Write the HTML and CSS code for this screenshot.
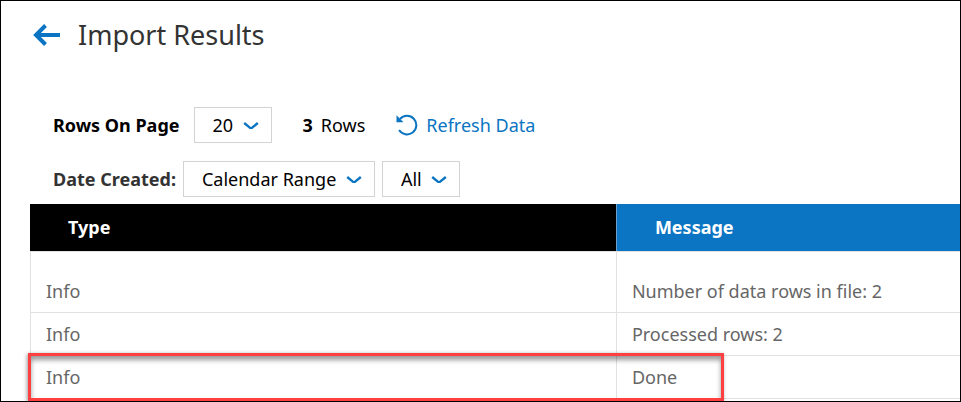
FILE: index.html
```html
<!DOCTYPE html>
<html lang="en">
<head>
    <meta charset="UTF-8">
    <meta name="viewport" content="width=device-width, initial-scale=1.0">
    <title>Import Results</title>
    <link rel="stylesheet" href="styles.css">
</head>
<body>
    <main class="page">
        <header class="page-header">
            <a class="back-link" href="#" aria-label="Back">
                <svg width="28" height="22" viewBox="0 0 28 22" fill="none" stroke="currentColor" stroke-width="4">
                    <path d="M27 11H3M12.5 1.5L3 11L12.5 20.5"/>
                </svg>
            </a>
            <h1>Import Results</h1>
        </header>

        <div class="toolbar">
            <label class="toolbar-label" for="page-size">Rows On Page</label>
            <div class="dropdown">
                <select id="page-size">
                    <option>20</option>
                </select>
                <svg class="chevron" width="16" height="10" viewBox="0 0 16 10">
                    <path d="M1.2 2L6.5 6.4Q8 7.4 9.5 6.4L14.8 2"/>
                </svg>
            </div>
            <span class="row-count"><b>3</b> <span>Rows</span></span>
            <button class="refresh-button" type="button">
                <svg width="22" height="22" viewBox="0 0 22 22" fill="none" stroke="currentColor" stroke-width="2">
                    <path d="M4 5A9.3 9.3 0 1 1 3.1 16"/>
                    <path d="M0.5 1.2V8.2H7.5Z" fill="currentColor" stroke="none"/>
                </svg>
                Refresh Data
            </button>
        </div>

        <div class="filters">
            <label class="filter-label" for="date-range">Date Created:</label>
            <div class="dropdown">
                <select id="date-range">
                    <option>Calendar Range</option>
                </select>
                <svg class="chevron" width="16" height="10" viewBox="0 0 16 10">
                    <path d="M1.2 2L6.5 6.4Q8 7.4 9.5 6.4L14.8 2"/>
                </svg>
            </div>
            <div class="dropdown">
                <select id="date-value" aria-label="Date value">
                    <option>All</option>
                </select>
                <svg class="chevron" width="16" height="10" viewBox="0 0 16 10">
                    <path d="M1.2 2L6.5 6.4Q8 7.4 9.5 6.4L14.8 2"/>
                </svg>
            </div>
        </div>

        <table class="results">
            <thead>
                <tr>
                    <th class="type-column" scope="col">Type</th>
                    <th class="message-column" scope="col">Message</th>
                </tr>
            </thead>
            <tbody>
                <tr class="first-row">
                    <td>Info</td>
                    <td>Number of data rows in file: 2</td>
                </tr>
                <tr>
                    <td>Info</td>
                    <td>Processed rows: 2</td>
                </tr>
                <tr>
                    <td class="highlighted">Info</td>
                    <td>Done</td>
                </tr>
            </tbody>
        </table>
    </main>
</body>
</html>
```

FILE: styles.css
```css
:root {
    --blue: #0b75c3;
    --text-color: #333333;
    --cell-text: #666666;
    --line: #e1e1e1;
    --control-border: #d3d3d3;
    --highlight: #ff4040;
}

*,
*::after {
    box-sizing: border-box;
}

body {
    margin: 0;
    background-color: #ffffff;
    color: #000000;
    font-family: "Noto Sans", sans-serif;
    font-size: 18px;
    line-height: 24px;
}

.page {
    min-height: 100vh;
    padding: 14px 0 0 29px;
    border: 1px solid #000000;
    overflow: hidden;
}

.page-header {
    display: flex;
    align-items: center;
    gap: 17px;
    padding-left: 3px;
    margin-bottom: 52px;
}

.back-link {
    display: flex;
    color: var(--blue);
}

h1 {
    margin: 0;
    color: var(--text-color);
    font-size: 27px;
    font-weight: 400;
    line-height: 40px;
}

.toolbar,
.filters {
    display: flex;
    align-items: center;
    padding-left: 23px;
}

.toolbar {
    margin-bottom: 18px;
}

.filters {
    gap: 7px;
    margin-bottom: 7px;
}

.toolbar-label,
.filter-label {
    font-weight: 700;
}

.toolbar-label {
    margin-right: 14px;
}

.filter-label {
    color: var(--text-color);
}

.dropdown {
    position: relative;
}

.dropdown select {
    appearance: none;
    display: block;
    height: 36px;
    margin: 0;
    padding: 0 37px 0 18px;
    border: 1px solid var(--control-border);
    border-radius: 0;
    background-color: #ffffff;
    color: #000000;
    font: inherit;
}

.chevron {
    position: absolute;
    top: 14px;
    right: 13px;
    fill: none;
    stroke: var(--blue);
    stroke-width: 2.4;
    pointer-events: none;
}

.row-count {
    display: flex;
    gap: 8px;
    margin: 0 31px;
}

.refresh-button {
    display: flex;
    align-items: center;
    gap: 8px;
    padding: 0;
    border: none;
    background: none;
    color: var(--blue);
    font: inherit;
    cursor: pointer;
}

.results {
    width: 100%;
    table-layout: fixed;
    border-collapse: separate;
    border-spacing: 0;
}

.results th {
    height: 47px;
    padding: 0 38px 2px;
    color: #ffffff;
    text-align: left;
}

.type-column {
    width: 63%;
    background-color: #000000;
}

.message-column {
    border-left: 1px solid #6c9fc9;
    background-color: var(--blue);
}

.results td {
    height: 43px;
    padding: 9px 15px;
    border-left: 1px solid var(--line);
    border-bottom: 1px solid var(--line);
    color: var(--cell-text);
}

.results .first-row td {
    padding-top: 27px;
    border-top: 1px solid var(--line);
}

.highlighted {
    position: relative;
}

/* Frame runs past the Type cell and into the Message cell */
.highlighted::after {
    content: "";
    position: absolute;
    top: -3px;
    left: -3px;
    width: 119%;
    height: 48px;
    border: 3px solid var(--highlight);
    box-shadow: -1px 1px 4px rgba(0, 0, 0, 0.4), inset 0 4px 5px rgba(0, 0, 0, 0.4);
    pointer-events: none;
}
```
